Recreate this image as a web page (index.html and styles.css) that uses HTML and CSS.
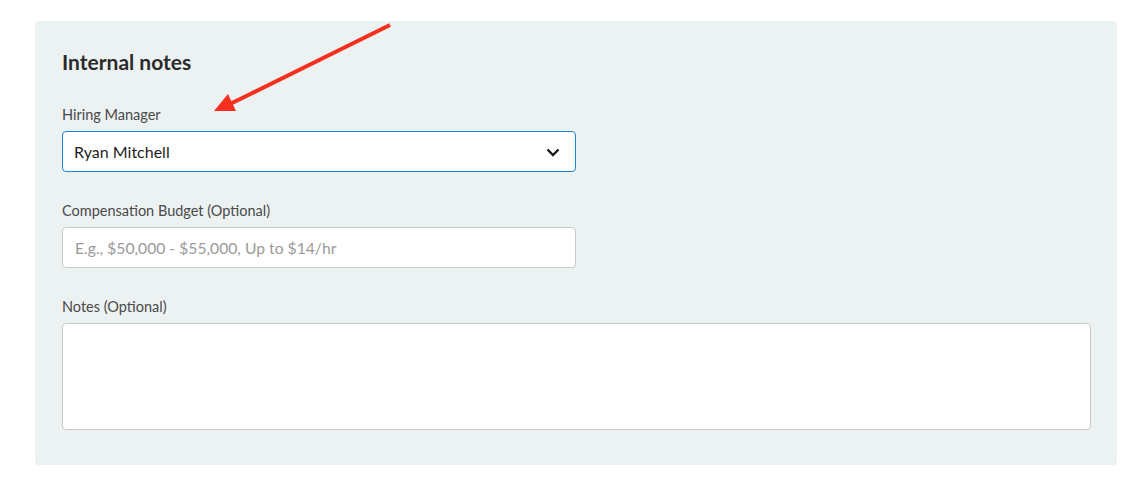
FILE: index.html
```html
<!DOCTYPE html>
<html lang="en">
<head>
    <meta charset="UTF-8">
    <title>Internal notes</title>
    <link rel="stylesheet" href="styles.css">
</head>
<body>
    <div id="notes-panel">
        <h2>Internal notes</h2>

        <div class="field">
            <label class="field-label">Hiring Manager</label>
            <div class="select-box">
                <span>Ryan Mitchell</span>
                <svg class="chevron" width="14" height="10" viewBox="0 0 14 10">
                    <path d="M1.5 2.5 L7 8 L12.5 2.5" fill="none" stroke="#1b1b1b" stroke-width="2.4"/>
                </svg>
            </div>
        </div>

        <div class="field">
            <label class="field-label">Compensation Budget (Optional)</label>
            <div class="text-input placeholder">E.g., $50,000 - $55,000, Up to $14/hr</div>
        </div>

        <div class="field">
            <label class="field-label">Notes (Optional)</label>
            <div class="text-area"></div>
        </div>

        <!-- annotation arrow drawn over the panel -->
        <svg id="arrow" width="200" height="100" viewBox="0 0 200 100">
            <line x1="190" y1="5" x2="30" y2="84" stroke="#f5301e" stroke-width="4"/>
            <polygon points="14,91 28,74 36,91" fill="#f5301e"/>
        </svg>
    </div>
</body>
</html>
```

FILE: styles.css
```css
body {
    font-family: Lato, "Open Sans", sans-serif;
    margin: 0;
    padding: 21px 14px 0 35px;
    background-color: #fff;
}

#notes-panel {
    background-color: #ecf1f1;
    border-radius: 4px;
    padding: 29px 26px 35px 27px;
    position: relative;
}

h2 {
    margin: 0 0 31px 0;
    font-size: 21px;
    line-height: 24px;
    font-weight: 700;
    color: #2b2b2b;
}

.field {
    margin-bottom: 29px;
}

.field:last-of-type {
    margin-bottom: 0;
}

.field-label {
    display: block;
    font-size: 14.5px;
    line-height: 20px;
    color: #4a4a4a;
    margin-bottom: 6px;
}

.select-box {
    width: 514px;
    height: 41px;
    box-sizing: border-box;
    background-color: #fff;
    border: 1px solid #1a86cc;
    border-radius: 4px;
    padding: 0 15px 0 11px;
    display: flex;
    align-items: center;
    justify-content: space-between;
    font-size: 16px;
    color: #1e1e1e;
}

.text-input {
    width: 514px;
    height: 41px;
    box-sizing: border-box;
    background-color: #fff;
    border: 1px solid #c9c9c9;
    border-radius: 4px;
    padding: 0 12px;
    display: flex;
    align-items: center;
    font-size: 15.7px;
}

.placeholder {
    color: #9a9a9a;
}

.text-area {
    height: 107px;
    box-sizing: border-box;
    background-color: #fff;
    border: 1px solid #c9c9c9;
    border-radius: 4px;
}

#arrow {
    position: absolute;
    left: 165px;
    top: -1px;
}
```
